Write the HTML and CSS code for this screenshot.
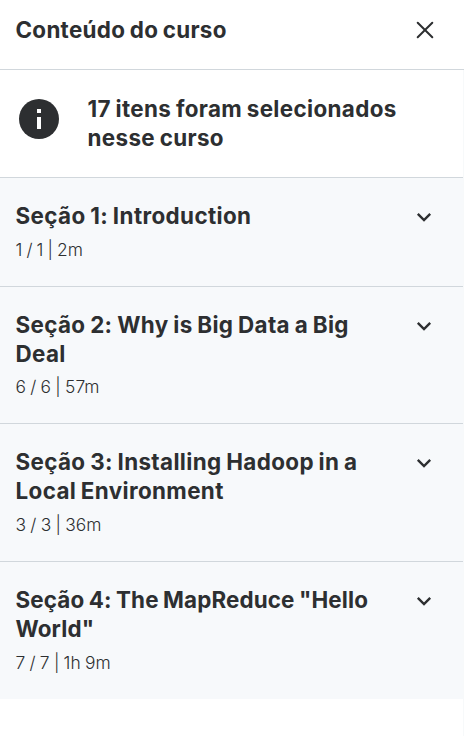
FILE: index.html
```html
<!DOCTYPE html>
<html lang="pt">
<head>
<meta charset="utf-8">
<title>Conteúdo do curso</title>
<link rel="stylesheet" href="styles.css">
</head>
<body>
<aside class="sidebar">
<header class="header"><h2 class="title">Conteúdo do curso</h2>
<svg class="close" viewBox="0 0 24 24"><path d="m4.7 4.7 14.6 14.6M19.3 4.7 4.7 19.3"/></svg></header>
<div class="content">
<div class="notice">
<svg class="info" viewBox="0 0 40 40"><circle cx="20" cy="20" r="20"/><path d="M18 10h4v4h-4zM18 18h4v12h-4z"/></svg>
<p class="message">17 itens foram selecionados<br>nesse curso</p></div>
<section class="section"><div><h3>Seção 1: Introduction</h3><p class="meta ones">1 / 1 | 2m</p></div><svg class="chevron" viewBox="0 0 20 20"><path d="m3.8 6.8 6.2 6.2 6.2-6.2"/></svg></section>
<section class="section"><div><h3 class="snug">Seção 2: Why is Big Data a Big<br>Deal</h3><p class="meta">6 / 6 | 57m</p></div><svg class="chevron" viewBox="0 0 20 20"><path d="m3.8 6.8 6.2 6.2 6.2-6.2"/></svg></section>
<section class="section"><div><h3 class="snug">Seção 3: Installing Hadoop in a<br>Local Environment</h3><p class="meta">3 / 3 | 36m</p></div><svg class="chevron" viewBox="0 0 20 20"><path d="m3.8 6.8 6.2 6.2 6.2-6.2"/></svg></section>
<section class="section"><div><h3 class="tight">Seção 4: The MapReduce "Hello<br>World"</h3><p class="meta">7 / 7 | 1h 9m</p></div><svg class="chevron" viewBox="0 0 20 20"><path d="m3.8 6.8 6.2 6.2 6.2-6.2"/></svg></section>
</div>
</aside>
</body>
</html>
```
FILE: styles.css
```css
*{box-sizing:border-box}
body{margin:0;background:#fff;color:#2d2f31;font-family:Inter,"Liberation Sans",sans-serif}
h2,h3,p{margin:0}
.sidebar{width:464px}
.header{height:70px;padding:0 27px 10px 15.5px;display:flex;align-items:center;justify-content:space-between;border-bottom:1px solid #d1d7dc}
.title,h3,.message{font-size:22.4px;line-height:28.8px;font-weight:700;white-space:nowrap;letter-spacing:.39px;word-spacing:-1px}
.title{padding-top:2px;letter-spacing:.29px}
h3.snug{letter-spacing:.37px}
h3.tight{letter-spacing:.13px}
.close{width:24px;height:24px;fill:none;stroke:#2d2f31;stroke-width:2;stroke-linecap:round}
.content{min-height:666px;border-right:1px solid #f7f9fa}
.notice{height:107px;padding:24px 19px 0;display:flex;align-items:flex-start;gap:28.5px}
.message{padding-top:1px;letter-spacing:.36px}
.info{width:40px;height:40px;margin-top:5px;fill:#2d2f31}
.info path{fill:#fff}
.section{background:#f7f9fb;border-top:1px solid #d1d7dc;padding:24px 29px 24px 15.5px;display:flex;justify-content:space-between}
.meta{font-size:17.4px;font-weight:350;line-height:24px;margin-top:7px;white-space:nowrap;letter-spacing:.05px;word-spacing:-.7px}
.meta.ones{letter-spacing:-.05px}
.chevron{width:20px;height:20px;margin-top:5px;fill:none;stroke:#2d2f31;stroke-width:2.4}
```
